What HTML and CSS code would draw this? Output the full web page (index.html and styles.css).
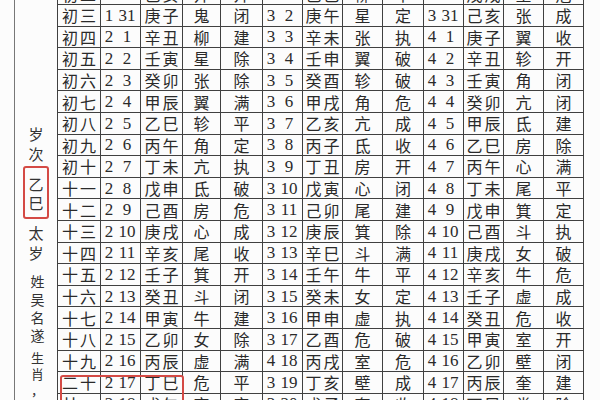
FILE: index.html
```html
<!DOCTYPE html>
<html lang="zh-CN">
<head>
<meta charset="utf-8">
<title>乙巳年历表</title>
<link rel="stylesheet" href="styles.css">
</head>
<body>
<div class="page">
  <aside class="side">
    <div class="vt v1"><span>岁</span><span>次</span></div>
    <div class="vt year"><span>乙</span><span>巳</span></div>
    <div class="vt v2"><span>太</span><span>岁</span></div>
    <div class="vt v3"><span>姓</span><span>吴</span><span>名</span><span>遂</span></div>
    <div class="vt v4"><span>生</span><span>肖</span><span>，</span></div>
  </aside>
  <div class="grid">
    <div class="d">初二</div><div class="n"><i>1</i><b>30</b></div><div class="c">己亥</div><div class="c">井</div><div class="c">开</div><div class="n"><i>3</i><b>1</b></div><div class="c">己巳</div><div class="c">柳</div><div class="c">平</div><div class="n"><i>3</i><b>30</b></div><div class="c">戊戌</div><div class="c">星</div><div class="c">危</div>
    <div class="d">初三</div><div class="n"><i>1</i><b>31</b></div><div class="c">庚子</div><div class="c">鬼</div><div class="c">闭</div><div class="n"><i>3</i><b>2</b></div><div class="c">庚午</div><div class="c">星</div><div class="c">定</div><div class="n"><i>3</i><b>31</b></div><div class="c">己亥</div><div class="c">张</div><div class="c">成</div>
    <div class="d">初四</div><div class="n"><i>2</i><b>1</b></div><div class="c">辛丑</div><div class="c">柳</div><div class="c">建</div><div class="n"><i>3</i><b>3</b></div><div class="c">辛未</div><div class="c">张</div><div class="c">执</div><div class="n"><i>4</i><b>1</b></div><div class="c">庚子</div><div class="c">翼</div><div class="c">收</div>
    <div class="d">初五</div><div class="n"><i>2</i><b>2</b></div><div class="c">壬寅</div><div class="c">星</div><div class="c">除</div><div class="n"><i>3</i><b>4</b></div><div class="c">壬申</div><div class="c">翼</div><div class="c">破</div><div class="n"><i>4</i><b>2</b></div><div class="c">辛丑</div><div class="c">轸</div><div class="c">开</div>
    <div class="d">初六</div><div class="n"><i>2</i><b>3</b></div><div class="c">癸卯</div><div class="c">张</div><div class="c">除</div><div class="n"><i>3</i><b>5</b></div><div class="c">癸酉</div><div class="c">轸</div><div class="c">破</div><div class="n"><i>4</i><b>3</b></div><div class="c">壬寅</div><div class="c">角</div><div class="c">闭</div>
    <div class="d">初七</div><div class="n"><i>2</i><b>4</b></div><div class="c">甲辰</div><div class="c">翼</div><div class="c">满</div><div class="n"><i>3</i><b>6</b></div><div class="c">甲戌</div><div class="c">角</div><div class="c">危</div><div class="n"><i>4</i><b>4</b></div><div class="c">癸卯</div><div class="c">亢</div><div class="c">闭</div>
    <div class="d">初八</div><div class="n"><i>2</i><b>5</b></div><div class="c">乙巳</div><div class="c">轸</div><div class="c">平</div><div class="n"><i>3</i><b>7</b></div><div class="c">乙亥</div><div class="c">亢</div><div class="c">成</div><div class="n"><i>4</i><b>5</b></div><div class="c">甲辰</div><div class="c">氐</div><div class="c">建</div>
    <div class="d">初九</div><div class="n"><i>2</i><b>6</b></div><div class="c">丙午</div><div class="c">角</div><div class="c">定</div><div class="n"><i>3</i><b>8</b></div><div class="c">丙子</div><div class="c">氐</div><div class="c">收</div><div class="n"><i>4</i><b>6</b></div><div class="c">乙巳</div><div class="c">房</div><div class="c">除</div>
    <div class="d">初十</div><div class="n"><i>2</i><b>7</b></div><div class="c">丁未</div><div class="c">亢</div><div class="c">执</div><div class="n"><i>3</i><b>9</b></div><div class="c">丁丑</div><div class="c">房</div><div class="c">开</div><div class="n"><i>4</i><b>7</b></div><div class="c">丙午</div><div class="c">心</div><div class="c">满</div>
    <div class="d">十一</div><div class="n"><i>2</i><b>8</b></div><div class="c">戊申</div><div class="c">氐</div><div class="c">破</div><div class="n"><i>3</i><b>10</b></div><div class="c">戊寅</div><div class="c">心</div><div class="c">闭</div><div class="n"><i>4</i><b>8</b></div><div class="c">丁未</div><div class="c">尾</div><div class="c">平</div>
    <div class="d">十二</div><div class="n"><i>2</i><b>9</b></div><div class="c">己酉</div><div class="c">房</div><div class="c">危</div><div class="n"><i>3</i><b>11</b></div><div class="c">己卯</div><div class="c">尾</div><div class="c">建</div><div class="n"><i>4</i><b>9</b></div><div class="c">戊申</div><div class="c">箕</div><div class="c">定</div>
    <div class="d">十三</div><div class="n"><i>2</i><b>10</b></div><div class="c">庚戌</div><div class="c">心</div><div class="c">成</div><div class="n"><i>3</i><b>12</b></div><div class="c">庚辰</div><div class="c">箕</div><div class="c">除</div><div class="n"><i>4</i><b>10</b></div><div class="c">己酉</div><div class="c">斗</div><div class="c">执</div>
    <div class="d">十四</div><div class="n"><i>2</i><b>11</b></div><div class="c">辛亥</div><div class="c">尾</div><div class="c">收</div><div class="n"><i>3</i><b>13</b></div><div class="c">辛巳</div><div class="c">斗</div><div class="c">满</div><div class="n"><i>4</i><b>11</b></div><div class="c">庚戌</div><div class="c">女</div><div class="c">破</div>
    <div class="d">十五</div><div class="n"><i>2</i><b>12</b></div><div class="c">壬子</div><div class="c">箕</div><div class="c">开</div><div class="n"><i>3</i><b>14</b></div><div class="c">壬午</div><div class="c">牛</div><div class="c">平</div><div class="n"><i>4</i><b>12</b></div><div class="c">辛亥</div><div class="c">牛</div><div class="c">危</div>
    <div class="d">十六</div><div class="n"><i>2</i><b>13</b></div><div class="c">癸丑</div><div class="c">斗</div><div class="c">闭</div><div class="n"><i>3</i><b>15</b></div><div class="c">癸未</div><div class="c">女</div><div class="c">定</div><div class="n"><i>4</i><b>13</b></div><div class="c">壬子</div><div class="c">虚</div><div class="c">成</div>
    <div class="d">十七</div><div class="n"><i>2</i><b>14</b></div><div class="c">甲寅</div><div class="c">牛</div><div class="c">建</div><div class="n"><i>3</i><b>16</b></div><div class="c">甲申</div><div class="c">虚</div><div class="c">执</div><div class="n"><i>4</i><b>14</b></div><div class="c">癸丑</div><div class="c">危</div><div class="c">收</div>
    <div class="d">十八</div><div class="n"><i>2</i><b>15</b></div><div class="c">乙卯</div><div class="c">女</div><div class="c">除</div><div class="n"><i>3</i><b>17</b></div><div class="c">乙酉</div><div class="c">危</div><div class="c">破</div><div class="n"><i>4</i><b>15</b></div><div class="c">甲寅</div><div class="c">室</div><div class="c">开</div>
    <div class="d">十九</div><div class="n"><i>2</i><b>16</b></div><div class="c">丙辰</div><div class="c">虚</div><div class="c">满</div><div class="n"><i>4</i><b>18</b></div><div class="c">丙戌</div><div class="c">室</div><div class="c">危</div><div class="n"><i>4</i><b>16</b></div><div class="c">乙卯</div><div class="c">壁</div><div class="c">闭</div>
    <div class="d">二十</div><div class="n"><i>2</i><b>17</b></div><div class="c">丁巳</div><div class="c">危</div><div class="c">平</div><div class="n"><i>3</i><b>19</b></div><div class="c">丁亥</div><div class="c">壁</div><div class="c">成</div><div class="n"><i>4</i><b>17</b></div><div class="c">丙辰</div><div class="c">奎</div><div class="c">建</div>
    <div class="d">廿一</div><div class="n"><i>2</i><b>18</b></div><div class="c">戊午</div><div class="c">室</div><div class="c">定</div><div class="n"><i>3</i><b>20</b></div><div class="c">戊子</div><div class="c">奎</div><div class="c">收</div><div class="n"><i>4</i><b>18</b></div><div class="c">丁巳</div><div class="c">娄</div><div class="c">除</div>
    <div class="mark"></div>
  </div>
</div>
</body>
</html>
```
FILE: styles.css
```css
html, body {
  margin: 0;
  padding: 0;
  background: #fcfcfc;
  overflow: hidden;
}
.page {
  display: flex;
  align-items: flex-start;
  width: 600px;
  height: 400px;
  overflow: hidden;
  color: #2a2a2a;
  font-family: "Noto Sans CJK SC", "Noto Sans", sans-serif;
}
.side {
  flex: none;
  margin-left: 14px;
  width: 43px;
  height: 400px;
  border-left: 1.5px solid #777;
  box-sizing: border-box;
  display: flex;
  flex-direction: column;
  align-items: center;
}
.vt {
  display: flex;
  flex-direction: column;
  align-items: center;
  font-size: 15px;
  color: #333;
}
.vt span {
  display: flex;
  align-items: center;
  height: 20px;
  line-height: 1;
}
.v1 { margin-top: 123px; }
.year {
  margin-top: 3px;
  width: 26px;
  box-sizing: border-box;
  border: 2px solid #d44a45;
  border-radius: 3px;
  padding: 6px 0 5px;
}
.year span { height: 19px; }
.v2 { margin-top: 3px; }
.v3 { margin-top: 10px; font-size: 14px; padding-left: 3px; }
.v3 span { height: 18px; }
.v4 { margin-top: 5px; font-size: 13px; padding-left: 3px; }
.v4 span { height: 16px; }
.grid {
  flex: none;
  position: relative;
  margin-top: -16.6px;
  display: grid;
  grid-template-columns: 43px 40px 42px 38px 42px 40px 40px 40px 41px 40px 40px 40px 40px;
  grid-auto-rows: 21.6px;
  border-left: 1.6px solid #404040;
}
.grid > div {
  box-sizing: border-box;
  border-right: 1.6px solid #404040;
  border-bottom: 1.6px solid #404040;
  display: flex;
  align-items: center;
  justify-content: center;
  font-size: 16px;
  line-height: 1;
  letter-spacing: 2px;
  text-indent: 2px;
  white-space: nowrap;
}
.grid > .n {
  justify-content: flex-start;
  padding-left: 2px;
  letter-spacing: 0;
  text-indent: 0;
  font-family: "Liberation Serif", "DejaVu Serif", serif;
  font-size: 17px;
}
.n i, .n b {
  display: block;
  flex: none;
  font-style: normal;
  font-weight: normal;
  text-align: center;
}
.n i { width: 12px; }
.n b { width: 24px; }
.grid > .mark {
  position: absolute;
  left: 2px;
  top: 391.6px;
  width: 124px;
  height: 40px;
  border: 2px solid #d44a45;
  border-radius: 3px;
  box-sizing: border-box;
}
```
